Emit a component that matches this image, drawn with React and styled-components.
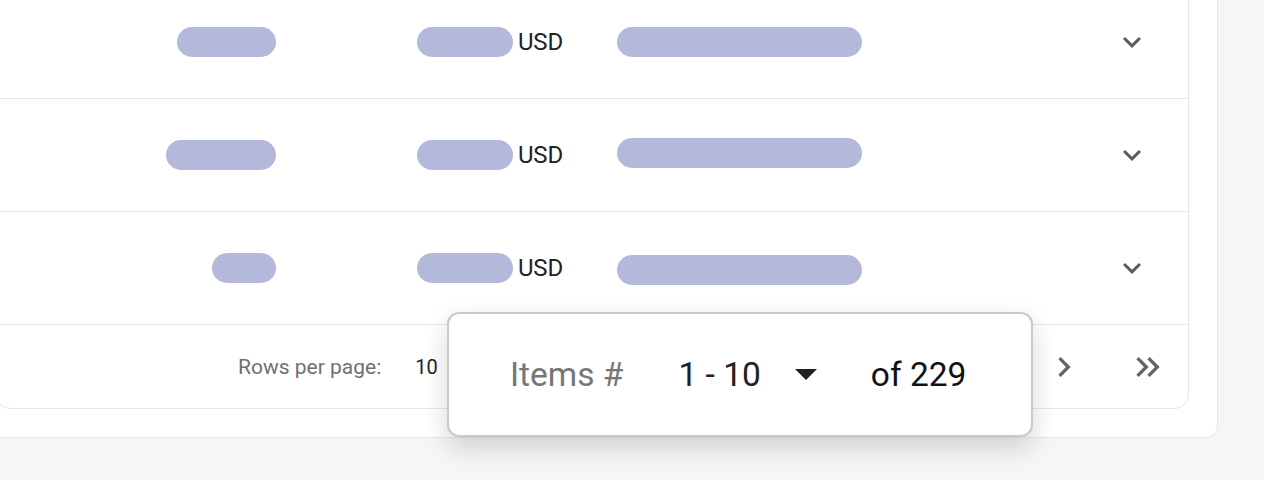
import styled, { createGlobalStyle } from "styled-components";

const GlobalStyle = createGlobalStyle`
  html, body {
    margin: 0;
    padding: 0;
    background: #f5f6f8;
    font-family: Roboto, "Liberation Sans", Arial, sans-serif;
  }
`;

const Page = styled.div`
  position: relative;
  width: 1264px;
  height: 480px;
  overflow: hidden;
  background: #f5f6f8;
`;

const OuterCard = styled.div`
  margin: -44px 46px 0 -33px;
  padding: 28px 28px 28px;
  background: #fff;
  border: 1px solid #e6e7ea;
  border-radius: 12px;
`;

const TableCard = styled.div`
  border: 1px solid #e6e7ea;
  border-radius: 14px;
  overflow: hidden;
`;

const Row = styled.div`
  display: grid;
  grid-template-columns: 279px 341px 245px 1fr;
  align-items: center;
  height: 112px;
  border-bottom: 1px solid #e6e7ea;
`;

const Cell = styled.div`
  display: flex;
  align-items: center;
  justify-content: ${(p) => p.$justify || "flex-start"};
  padding-left: ${(p) => p.$padLeft || 0}px;
  padding-right: ${(p) => p.$padRight || 0}px;
`;

const Pill = styled.span`
  display: inline-block;
  width: ${(p) => p.$w}px;
  height: 30px;
  border-radius: 15px;
  background: #b4b8db;
  transform: translateY(${(p) => p.$shift || 0}px);
`;

const Currency = styled.span`
  margin-left: 5px;
  font-size: 24px;
  color: #222;
  letter-spacing: -0.2px;
`;

const ExpandButton = styled.button`
  display: flex;
  align-items: center;
  justify-content: center;
  width: 48px;
  height: 48px;
  padding: 0;
  border: none;
  background: transparent;
  color: #5c5c5c;
`;

const Footer = styled.div`
  display: flex;
  align-items: center;
  height: 83px;
  padding: 0 16px 0 241px;
`;

const FooterLabel = styled.span`
  font-size: 21px;
  color: #707070;
`;

const FooterValue = styled.span`
  margin-left: 34px;
  font-size: 20px;
  color: #222;
`;

const Spacer = styled.div`
  flex: 1;
`;

const NavButton = styled.button`
  display: flex;
  align-items: center;
  justify-content: center;
  width: 48px;
  height: 48px;
  margin-left: ${(p) => p.$gap || 0}px;
  padding: 0;
  border: none;
  background: transparent;
  color: #646464;
`;

const RangePopup = styled.div`
  position: absolute;
  left: 447px;
  top: 312px;
  width: 586px;
  height: 125px;
  box-sizing: border-box;
  display: flex;
  align-items: center;
  padding-left: 61px;
  background: #fff;
  border: 2px solid #c9c9c9;
  border-radius: 12px;
  box-shadow: 0 10px 26px rgba(0, 0, 0, 0.16);
  font-size: 33.5px;
`;

const PopupLabel = styled.span`
  color: #777;
`;

const PopupRange = styled.span`
  margin-left: 55px;
  color: #222;
`;

const DropArrow = styled.span`
  margin-left: 34px;
  width: 0;
  height: 0;
  border-left: 11px solid transparent;
  border-right: 11px solid transparent;
  border-top: 11px solid #222;
`;

const PopupTotal = styled.span`
  margin-left: 54px;
  color: #111;
`;

const ChevronDown = () => (
  <svg width="36" height="36" viewBox="0 0 24 24" fill="currentColor">
    <path d="M16.59 8.59 12 13.17 7.41 8.59 6 10l6 6 6-6z" />
  </svg>
);

const ChevronRight = () => (
  <svg width="40" height="40" viewBox="0 0 24 24" fill="currentColor">
    <path d="M8.59 16.59 13.17 12 8.59 7.41 10 6l6 6-6 6z" />
  </svg>
);

const DoubleChevronRight = () => (
  <svg width="40" height="40" viewBox="0 0 24 24" fill="currentColor">
    <path d="M6.41 6 5 7.41 9.58 12 5 16.59 6.41 18l6-6z" />
    <path d="m13 6-1.41 1.41L16.17 12l-4.58 4.59L13 18l6-6z" />
  </svg>
);

const rows = [
  { id: 1, first: 99, amount: 96, ref: 245, refShift: 0 },
  { id: 2, first: 110, amount: 96, ref: 245, refShift: -2 },
  { id: 3, first: 64, amount: 96, ref: 245, refShift: 2 },
];

export default function App() {
  return (
    <Page>
      <GlobalStyle />
      <OuterCard>
        <TableCard>
          {rows.map((row) => (
            <Row key={row.id}>
              <Cell $justify="flex-end">
                <Pill $w={row.first} />
              </Cell>
              <Cell $padLeft={141}>
                <Pill $w={row.amount} />
                <Currency>USD</Currency>
              </Cell>
              <Cell>
                <Pill $w={row.ref} $shift={row.refShift} />
              </Cell>
              <Cell $justify="flex-end" $padRight={32}>
                <ExpandButton aria-label="Expand row">
                  <ChevronDown />
                </ExpandButton>
              </Cell>
            </Row>
          ))}
          <Footer>
            <FooterLabel>Rows per page:</FooterLabel>
            <FooterValue>10</FooterValue>
            <Spacer />
            <NavButton aria-label="Next page">
              <ChevronRight />
            </NavButton>
            <NavButton aria-label="Last page" $gap={36}>
              <DoubleChevronRight />
            </NavButton>
          </Footer>
        </TableCard>
      </OuterCard>
      <RangePopup>
        <PopupLabel>Items #</PopupLabel>
        <PopupRange>1 - 10</PopupRange>
        <DropArrow />
        <PopupTotal>of 229</PopupTotal>
      </RangePopup>
    </Page>
  );
}
